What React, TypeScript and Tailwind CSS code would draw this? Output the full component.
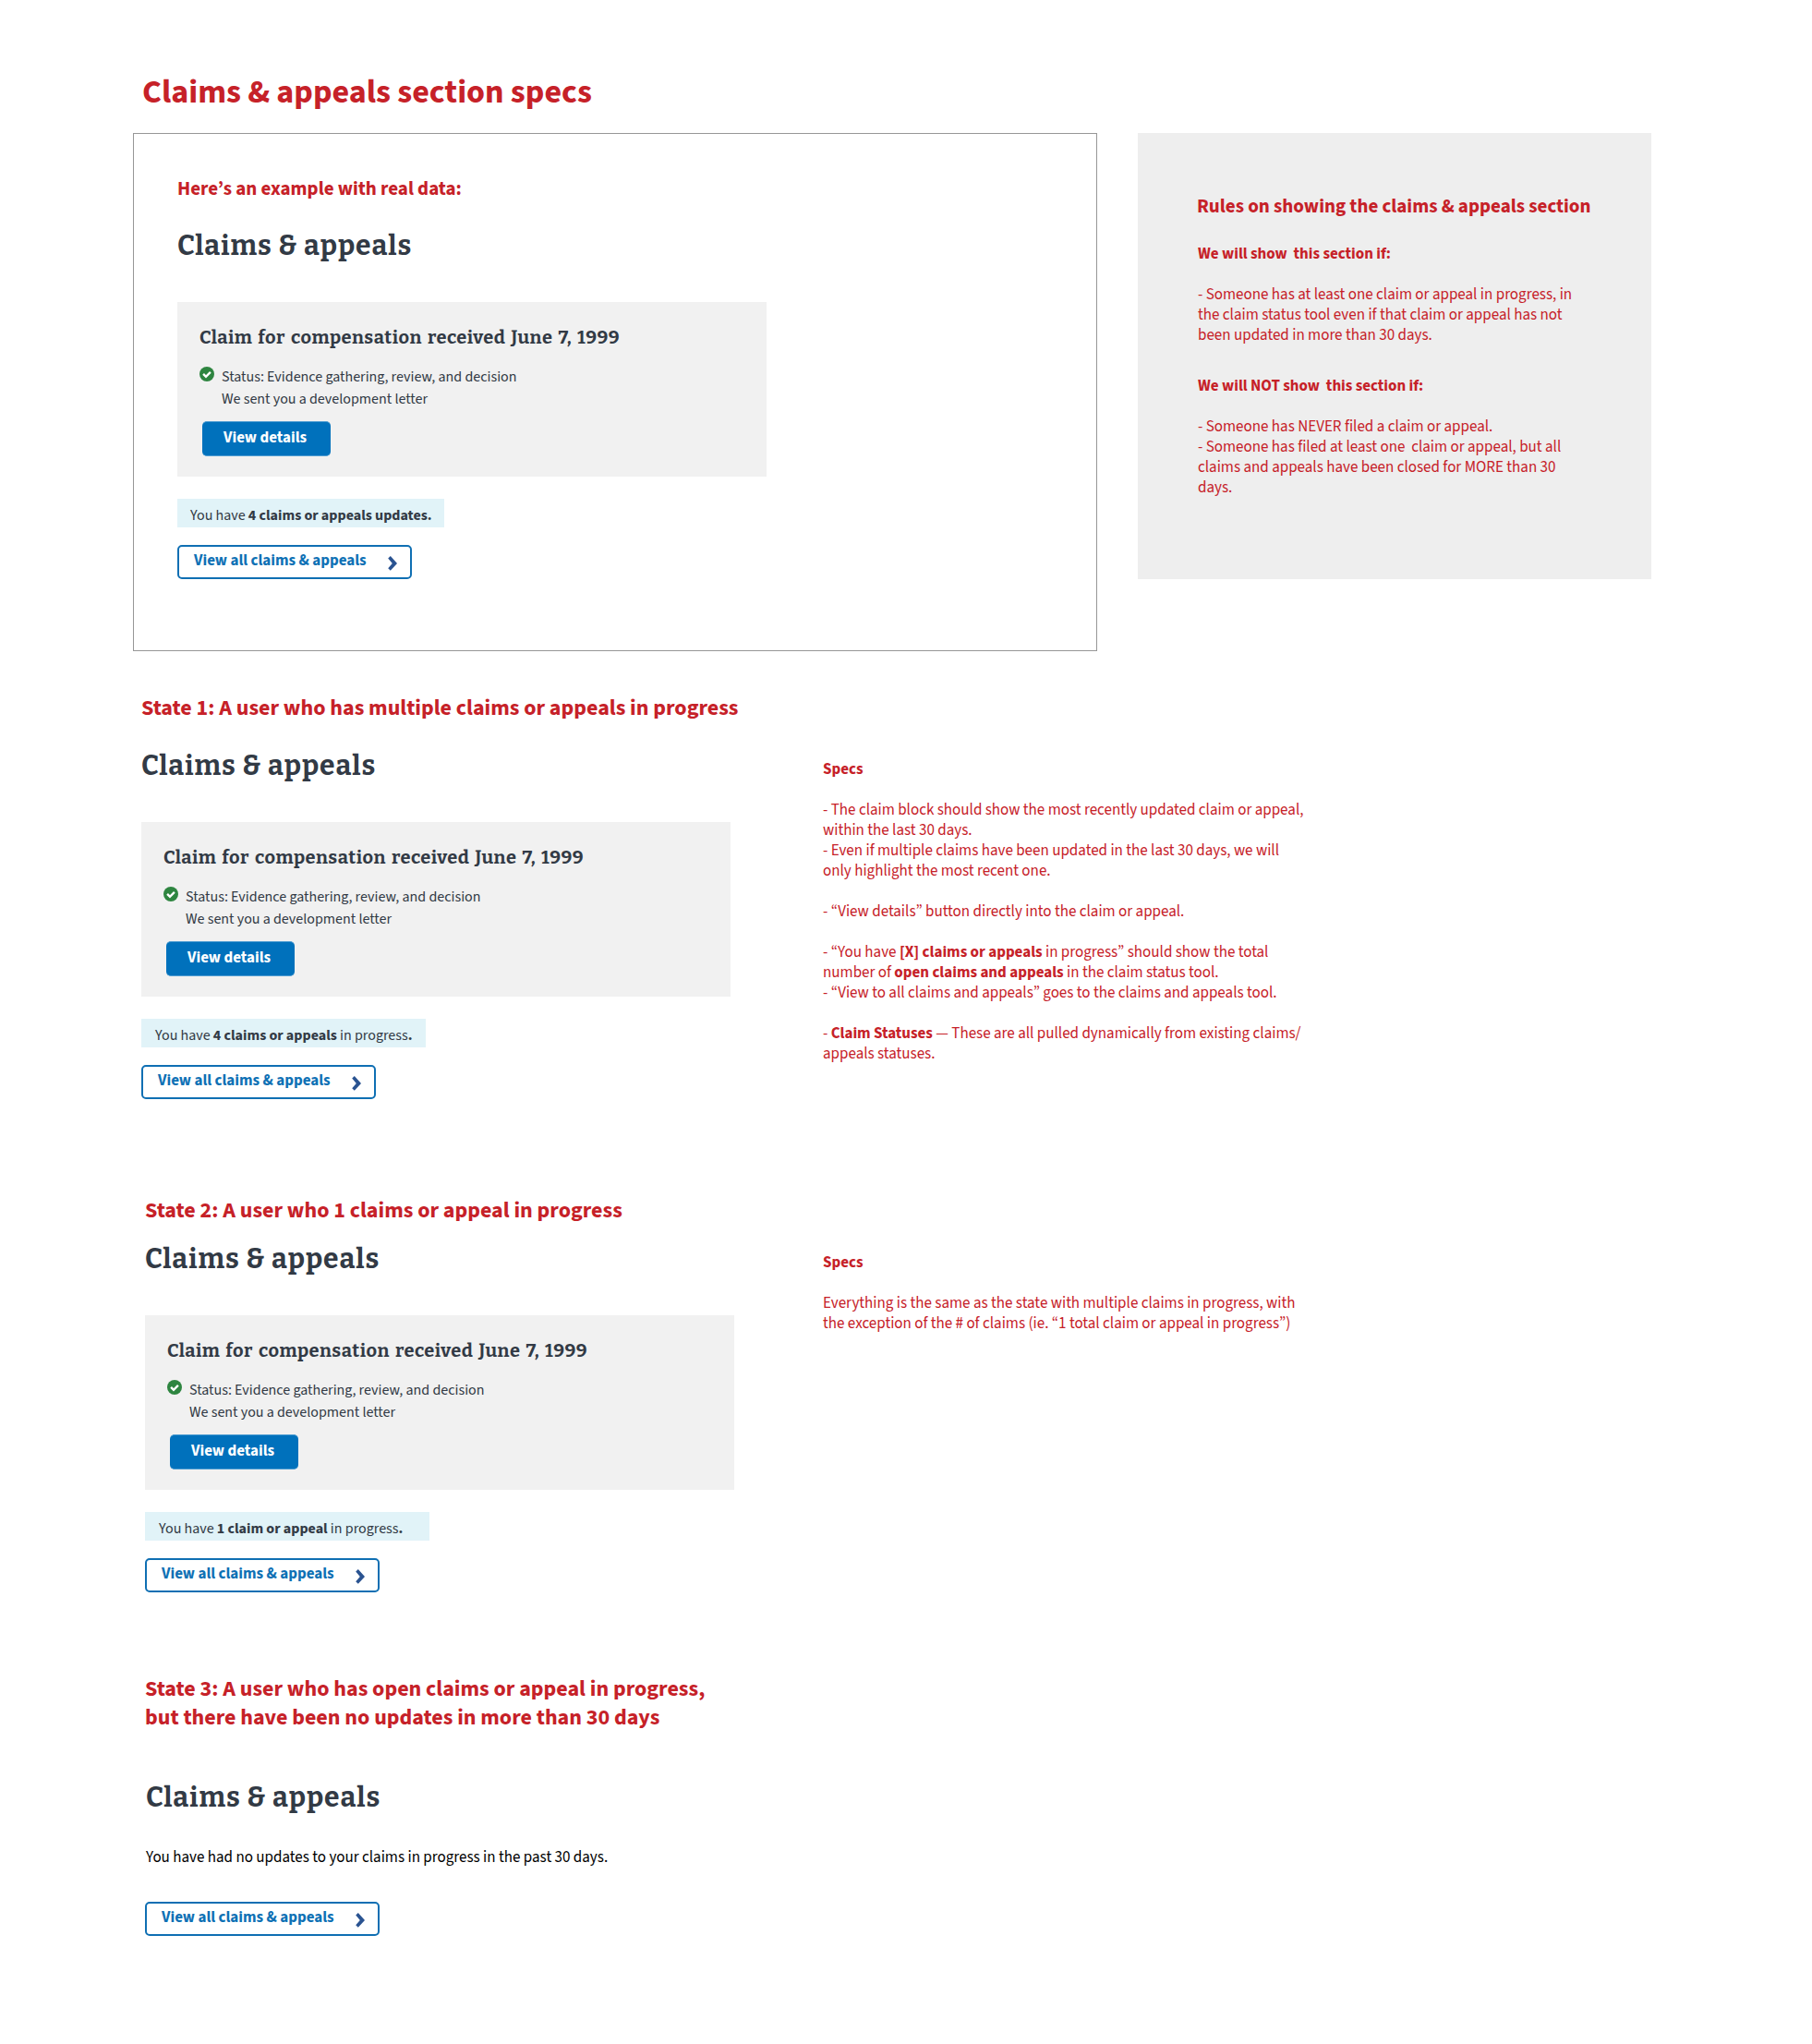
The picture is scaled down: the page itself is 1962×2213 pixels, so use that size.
import React from 'react';

/** Green disc with a heavy white tick. */
function CheckCircle() {
  return (
    <svg className="mt-px size-4" viewBox="0 0 16 16" fill="none">
      <circle cx="8" cy="8" r="8" fill="#2e8540" />
      <path d="M4.1 7.9 7 10.8 11.9 5.9" stroke="#fff" strokeWidth="2.4" />
    </svg>
  );
}

/** Right-pointing block chevron used in the outlined link button. */
function Chevron() {
  return (
    <svg className="h-4 w-2.5" viewBox="0 0 10 16" fill="#2a5391">
      <path d="M2.8 0 10 7.9 2.8 15.8 0.2 13.2 4.8 7.9 0.2 2.6Z" />
    </svg>
  );
}

function ViewAllButton() {
  return (
    <button className="flex h-[37px] w-[254px] items-start justify-between rounded-[5px] border-2 border-[#0f6fb3] bg-white pr-3.5 pl-4 text-[17px] leading-[30px] font-bold text-[#0f71b5]">
      View all claims &amp; appeals
      <span className="pt-2.5">
        <Chevron />
      </span>
    </button>
  );
}

function SectionTitle() {
  return (
    <h2 className="font-['Bitter','DejaVu_Serif_Condensed',serif] text-[30px] leading-9 font-bold tracking-[0.9px] [word-spacing:0.4px] whitespace-nowrap text-[#323a45]">
      Claims &amp; appeals
    </h2>
  );
}

function ClaimCard() {
  return (
    <article className="h-[189px] w-[638px] bg-[#f1f1f1] pt-[26px] pl-6 text-[#323a45]">
      <h3 className="font-['Bitter','DejaVu_Serif_Condensed',serif] text-xl leading-6 font-bold tracking-[0.46px] [word-spacing:2px] whitespace-nowrap">
        Claim for compensation received June 7, 1999
      </h3>
      <div className="mt-[19px] flex gap-2 text-base leading-6">
        <CheckCircle />
        <div>
          <p>Status: Evidence gathering, review, and decision</p>
          <p>We sent you a development letter</p>
        </div>
      </div>
      <button className="mt-3 ml-[3px] block h-[38px] w-[139px] rounded-[5px] border-y border-[#4f9dd2] bg-[#0071bc] pb-px pl-[23px] text-left text-[17px] leading-[35px] font-bold text-white">
        View details
      </button>
    </article>
  );
}

function Claims({ notice, noticeClass }: { notice: React.ReactNode; noticeClass: string }) {
  return (
    <section>
      <SectionTitle />
      <div className="mt-[43px]">
        <ClaimCard />
      </div>
      <p className={`mt-6 h-[31px] bg-[#e1f3f8] pt-1.5 text-base leading-6 whitespace-nowrap text-[#323a45] ${noticeClass}`}>
        {notice}
      </p>
      <div className="mt-[19px]">
        <ViewAllButton />
      </div>
    </section>
  );
}

function StateTitle({ children }: { children: React.ReactNode }) {
  return <h2 className="text-2xl leading-[31px] font-bold whitespace-pre text-[#c62128]">{children}</h2>;
}

/** Annotation copy: a bold heading, then paragraphs given as fixed lines. */
function Note({
  heading,
  paragraphs,
  className,
}: {
  heading: string;
  paragraphs: React.ReactNode[][];
  className: string;
}) {
  return (
    <div className={`flex flex-col gap-[22px] text-[17px] leading-[22px] whitespace-pre text-[#c62128] ${className}`}>
      <h3 className="font-bold">{heading}</h3>
      {paragraphs.map((lines, i) => (
        <div key={i}>
          {lines.map((line, j) => (
            <p key={j}>{line}</p>
          ))}
        </div>
      ))}
    </div>
  );
}

export default function App() {
  return (
    <main className="min-h-[2213px] w-[1962px] bg-white pt-[77px] font-['Source_Sans_3','Noto_Sans_CJK_SC',sans-serif]">
      <h1 className="pl-[154px] text-4xl leading-[45px] font-bold text-[#c62128]">Claims &amp; appeals section specs</h1>

      <div className="mt-[22px] ml-36 flex items-start gap-11">
        <div className="h-[561px] w-[1044px] border border-[#979797] pt-[46px] pl-[47px]">
          <h2 className="mb-[31px] text-[21px] leading-[26px] font-bold text-[#c62128]">Here’s an example with real data:</h2>
          <Claims
            noticeClass="w-[289px] pl-3.5"
            notice={
              <>
                You have <b>4 claims or appeals updates.</b>
              </>
            }
          />
        </div>

        <aside className="h-[483px] w-[556px] bg-[#eeeeee] pt-[66px] pl-[65px]">
          <h2 className="-ml-px text-[21px] leading-[26px] font-bold whitespace-nowrap text-[#c62128]">
            Rules on showing the claims &amp; appeals section
          </h2>
          <Note
            className="mt-7"
            heading="We will show  this section if:"
            paragraphs={[
              [
                '- Someone has at least one claim or appeal in progress, in',
                'the claim status tool even if that claim or appeal has not',
                'been updated in more than 30 days.',
              ],
            ]}
          />
          <Note
            className="mt-[33px]"
            heading="We will NOT show  this section if:"
            paragraphs={[
              [
                '- Someone has NEVER filed a claim or appeal.',
                '- Someone has filed at least one  claim or appeal, but all',
                'claims and appeals have been closed for MORE than 30',
                'days.',
              ],
            ]}
          />
        </aside>
      </div>

      <div className="mt-[46px] ml-[153px] flex items-start">
        <div className="flex w-[738px] flex-col gap-[29px]">
          <StateTitle>State 1: A user who has multiple claims or appeals in progress</StateTitle>
          <Claims
            noticeClass="w-[308px] pl-[15px]"
            notice={
              <>
                You have <b>4 claims or appeals</b> in progress<b>.</b>
              </>
            }
          />
        </div>
        <Note
          className="pt-[71px]"
          heading="Specs"
          paragraphs={[
            [
              '- The claim block should show the most recently updated claim or appeal,',
              'within the last 30 days.',
              '- Even if multiple claims have been updated in the last 30 days, we will',
              'only highlight the most recent one.',
            ],
            ['- “View details” button directly into the claim or appeal.'],
            [
              <>
                - “You have <b>[X] claims or appeals</b> in progress” should show the total
              </>,
              <>
                number of <b>open claims and appeals</b> in the claim status tool.
              </>,
              '- “View to all claims and appeals” goes to the claims and appeals tool.',
            ],
            [
              <>
                - <b>Claim Statuses</b> — These are all pulled dynamically from existing claims/
              </>,
              'appeals statuses.',
            ],
          ]}
        />
      </div>

      <div className="mt-[105px] ml-[157px] flex items-start">
        <div className="flex w-[734px] flex-col gap-[19px]">
          <StateTitle>State 2: A user who 1 claims or appeal in progress</StateTitle>
          <Claims
            noticeClass="w-[308px] pl-[15px]"
            notice={
              <>
                You have <b>1 claim or appeal</b> in progress<b>.</b>
              </>
            }
          />
        </div>
        <Note
          className="pt-[61px]"
          heading="Specs"
          paragraphs={[
            [
              'Everything is the same as the state with multiple claims in progress, with',
              'the exception of the # of claims (ie. “1 total claim or appeal in progress”)',
            ],
          ]}
        />
      </div>

      <section className="mt-[89px] ml-[157px]">
        <StateTitle>{'State 3: A user who has open claims or appeal in progress,\nbut there have been no updates in more than 30 days'}</StateTitle>
        <div className="mt-[53px] pl-px">
          <SectionTitle />
          <p className="mt-9 mb-[37px] text-[17px] leading-[22px] text-black">
            You have had no updates to your claims in progress in the past 30 days.
          </p>
        </div>
        <ViewAllButton />
      </section>
    </main>
  );
}
